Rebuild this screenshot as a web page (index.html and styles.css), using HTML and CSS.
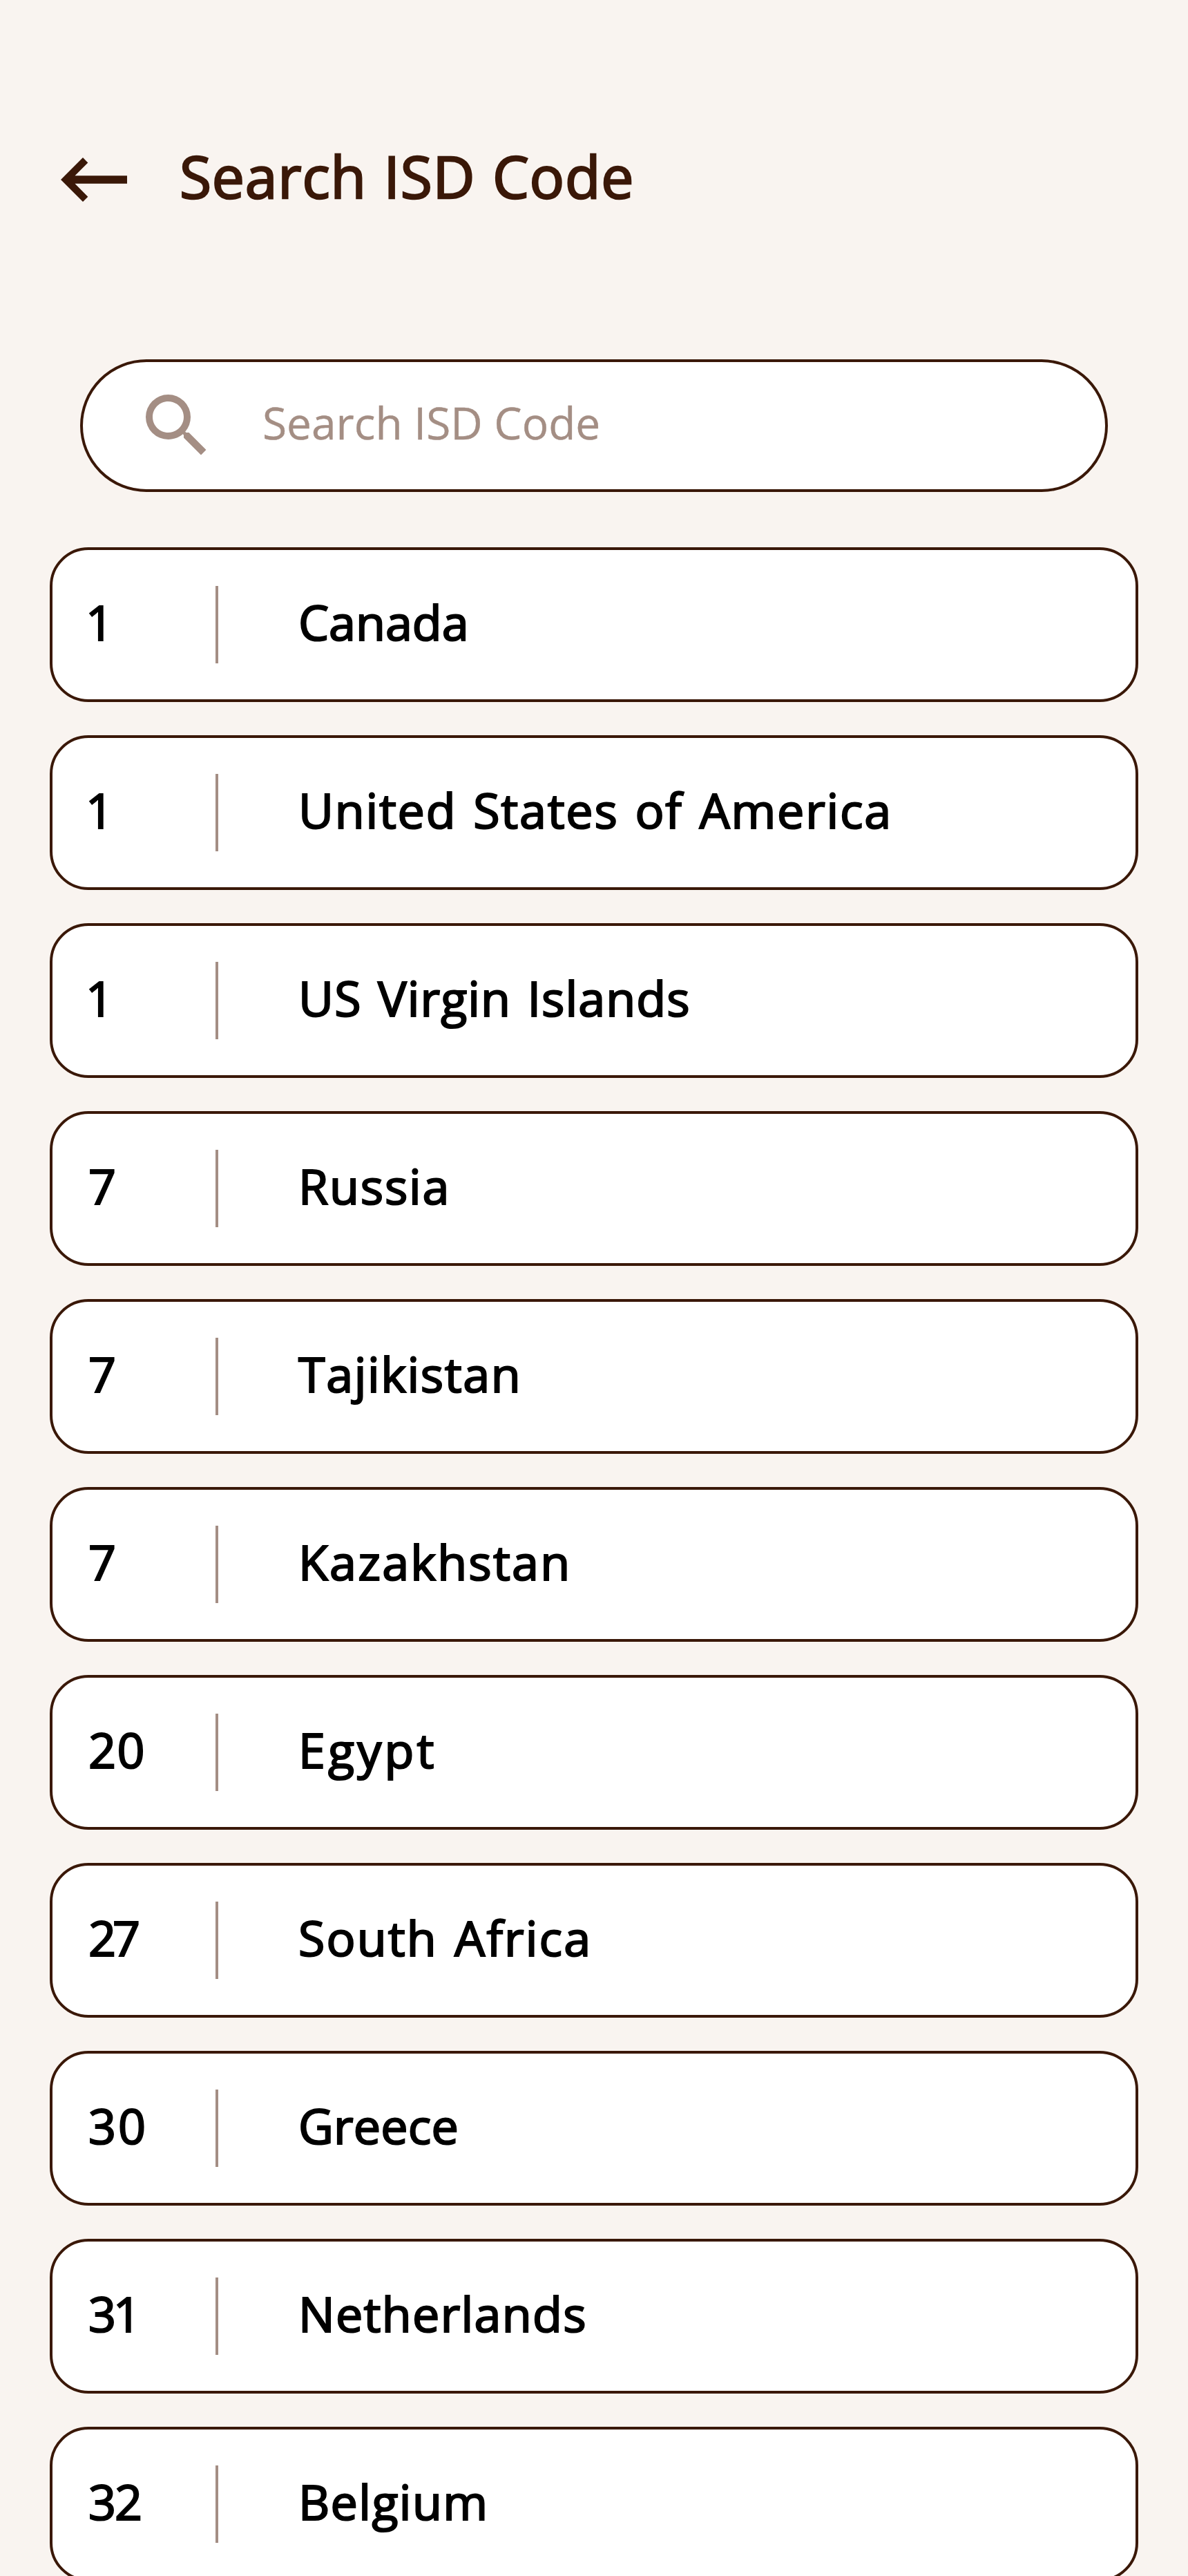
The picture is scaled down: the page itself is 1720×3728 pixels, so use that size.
FILE: index.html
```
<!DOCTYPE html>
<html lang="en">
<head>
<meta charset="utf-8">
<title>Search ISD Code</title>
<link rel="stylesheet" href="styles.css">
</head>
<body>
<main class="screen">
  <header class="topbar">
    <svg class="back" viewBox="0 0 96 64" aria-label="Back"><path d="M32 0 0 32l32 32 7.3-7.3L20.5 37.7H96V26.3H20.5L39.3 7.4z"/></svg>
    <h1 class="title">Search ISD Code</h1>
  </header>
  <div class="search">
    <svg class="search-icon" viewBox="0 0 24 24"><path d="M15.5 14h-.79l-.28-.27A6.471 6.471 0 0 0 16 9.5 6.5 6.5 0 1 0 9.5 16c1.61 0 3.09-.59 4.23-1.57l.27.28v.79l5 4.99L20.49 19l-4.99-5zm-6 0C7.01 14 5 11.99 5 9.5S7.01 5 9.5 5 14 7.01 14 9.5 11.99 14 9.5 14z"/></svg>
    <span class="placeholder">Search ISD Code</span>
  </div>
  <ul class="list">
    <li class="row ca"><span class="code one">1</span><span class="name">Canada</span></li>
    <li class="row us"><span class="code one">1</span><span class="name">United States of America</span></li>
    <li class="row vi"><span class="code one">1</span><span class="name">US Virgin Islands</span></li>
    <li class="row ru"><span class="code">7</span><span class="name">Russia</span></li>
    <li class="row tj"><span class="code">7</span><span class="name">Tajikistan</span></li>
    <li class="row kz"><span class="code">7</span><span class="name">Kazakhstan</span></li>
    <li class="row eg"><span class="code">20</span><span class="name">Egypt</span></li>
    <li class="row za"><span class="code">27</span><span class="name">South Africa</span></li>
    <li class="row gr"><span class="code">30</span><span class="name">Greece</span></li>
    <li class="row nl"><span class="code">31</span><span class="name">Netherlands</span></li>
    <li class="row be"><span class="code">32</span><span class="name">Belgium</span></li>
  </ul>
</main>
</body>
</html>
```
FILE: styles.css
```
* { box-sizing: border-box; }
body { margin: 0; background: #f9f4f0; font-family: "Open Sans", "Noto Sans", sans-serif; }
.screen { height: 3728px; overflow: hidden; }

.topbar { display: flex; align-items: center; height: 520px; padding-left: 88px; gap: 76px; }
.back { width: 96px; height: 64px; fill: #3a1808; }
.title {
  margin: 0; padding-bottom: 11px; font-size: 84px; font-weight: 400; line-height: 120px;
  color: #3a1808; -webkit-text-stroke: 2.5px #3a1808; letter-spacing: .8px; word-spacing: 2px;
}

.search {
  display: flex; align-items: center; height: 192px; margin: 0 116px; padding-left: 76px;
  border: 4px solid #3a1808; border-radius: 96px; background: #fff;
}
.search-icon { width: 120px; height: 120px; fill: #a48e84; }
.placeholder {
  margin-left: 64px; padding-bottom: 9px; font-size: 64px; line-height: 90px;
  color: #a48e84; -webkit-text-stroke: .4px #a48e84;
}

.list { display: flex; flex-direction: column; gap: 48px; margin: 80px 72px 0; padding: 0; list-style: none; }
.row {
  display: flex; align-items: center; flex: none; height: 224px; padding-left: 52px;
  border: 4px solid #3a1808; border-radius: 56px; background: #fff;
  font-size: 70px; line-height: 104px; color: #000; -webkit-text-stroke: 2.2px #000;
}
.row::before { content: ""; order: 1; width: 4px; height: 112px; background: #a48e84; }
.code { width: 184px; padding-bottom: 8px; }
.one { text-indent: -4px; }
.name { order: 2; padding: 0 0 8px 116px; word-spacing: 4px; white-space: nowrap; }

.us .name { letter-spacing: 1.75px; }
.vi .name { letter-spacing: 1.1px; }
.ru .name { letter-spacing: 1.8px; }
.tj .name { letter-spacing: 1.6px; }
.kz .name { letter-spacing: 2.2px; }
.eg .name { letter-spacing: 4.2px; }
.za .name { letter-spacing: 2.1px; }
.gr .name { letter-spacing: .15px; }
.nl .name { letter-spacing: 1.3px; }
.be .name { letter-spacing: 1.4px; }
.eg .code { letter-spacing: 1.5px; }
.za .code { letter-spacing: -5px; }
.gr .code { letter-spacing: 3px; }
.nl .code { letter-spacing: -4px; }
.be .code { letter-spacing: -2px; }
```
